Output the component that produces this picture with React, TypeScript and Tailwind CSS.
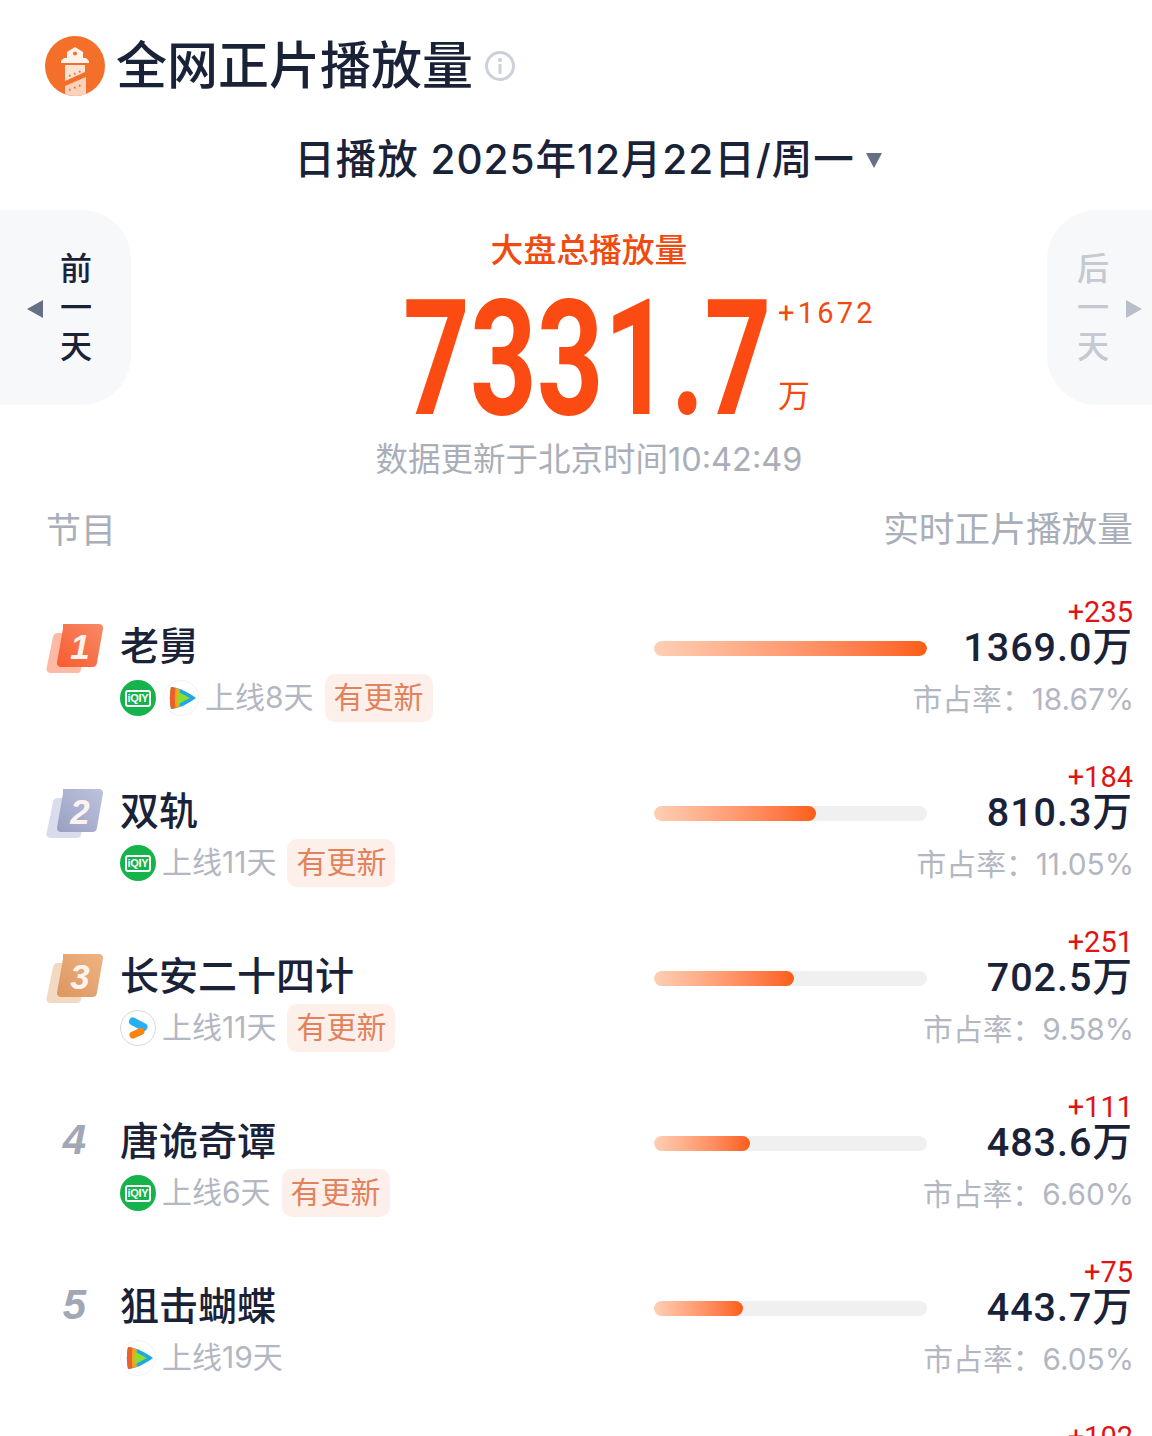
import React from 'react';

const FONT = "font-['Inter','Noto_Sans_CJK_SC',sans-serif]";

interface Show {
  name: string;
  icons: ('iqiyi' | 'tencent' | 'youku')[];
  days: string;
  updated: boolean;
  delta: string;
  value: string;
  share: string;
  bar: number;
}

const shows: Show[] = [
  { name: '老舅', icons: ['iqiyi', 'tencent'], days: '上线8天', updated: true, delta: '+235', value: '1369.0', share: '18.67%', bar: 273 },
  { name: '双轨', icons: ['iqiyi'], days: '上线11天', updated: true, delta: '+184', value: '810.3', share: '11.05%', bar: 162 },
  { name: '长安二十四计', icons: ['youku'], days: '上线11天', updated: true, delta: '+251', value: '702.5', share: '9.58%', bar: 140 },
  { name: '唐诡奇谭', icons: ['iqiyi'], days: '上线6天', updated: true, delta: '+111', value: '483.6', share: '6.60%', bar: 96 },
  { name: '狙击蝴蝶', icons: ['tencent'], days: '上线19天', updated: false, delta: '+75', value: '443.7', share: '6.05%', bar: 89 },
];

const Logo = () => (
  <svg width="60" height="60" viewBox="0 0 60 60" className="shrink-0">
    <defs>
      <clipPath id="logo-clip"><circle cx="30" cy="30" r="30" /></clipPath>
    </defs>
    <g clipPath="url(#logo-clip)">
      <rect width="60" height="60" fill="#f4702a" />
      <path d="M22 22v-6l8-5 8 5v6z" fill="#fdf3ec" />
      <circle cx="30" cy="17.500" r="2" fill="#f4702a" />
      <path d="M16 27v-2l3-3h22l3 3v2z" fill="#fdf3ec" />
      <path d="M20 29h20v7l-20 9z" fill="#fbe3d4" />
      <path d="M20 50l21-9v19H20z" fill="#fbd3bc" />
      <path d="M24 40l1.500-.7M29 38l1.500-.7M34 36l1.500-.7M24 54l1.500-.6M29 52l1.500-.6M34 50l1.500-.6" stroke="#f4702a" strokeWidth="2" />
    </g>
  </svg>
);

const IqiyiIcon = () => (
  <div className="flex h-9 w-9 shrink-0 items-center justify-center rounded-full bg-[#16b24b]">
    <div className="rounded-[3px] border-2 border-white px-[1px] font-['Liberation_Sans',sans-serif] text-[11px] font-bold leading-[13px] tracking-[-0.3px] text-white">
      iQIY
    </div>
  </div>
);

const TencentIcon = () => (
  <svg width="36" height="36" viewBox="0 0 36 36" className="shrink-0">
    <circle cx="18" cy="18" r="17.500" fill="#fff" stroke="#f1f2f4" />
    <path d="M8 7c9 1 17 5 25 11-8 6-16 10-25 11-1.500-7-1.500-15 0-22z" fill="#1fa9e0" />
    <path d="M8 7c-1.500 7-1.500 15 0 22 3-.4 6-1.200 9-2.400-1-5.500-1-11.700 0-17.200-3-1.100-6-2-9-2.400z" fill="#f5a21c" />
    <path d="M8 7c-1.500 7-1.500 15 0 22 1.500-.2 3-.5 4.500-.9-.8-6.500-.8-13.700 0-20.200-1.500-.4-3-.7-4.500-.9z" fill="#e8602c" />
    <path d="M14.500 11.500L27 18l-12.500 6.500z" fill="#8fdc2e" />
  </svg>
);

const YoukuIcon = () => (
  <svg width="36" height="36" viewBox="0 0 36 36" className="shrink-0">
    <circle cx="18" cy="18" r="17.500" fill="#fff" stroke="#d5d8dd" />
    <path d="M13 11.500L23.500 17" stroke="#28aef3" strokeWidth="8" strokeLinecap="round" />
    <path d="M13 25L21 21.500" stroke="#f7860f" strokeWidth="7" strokeLinecap="round" />
  </svg>
);

const RankBadge = ({ rank }: { rank: number }) => {
  if (rank > 3) {
    return (
      <div className="mt-[24px] flex h-[50px] w-[58px] shrink-0 items-center justify-center pr-[1px] font-['Liberation_Sans',sans-serif] text-[42px] font-bold italic text-[#a2a7b5]">
        {rank}
      </div>
    );
  }
  const palette = [
    { back: '#fbb9a6', from: '#f78a66', to: '#fa5a2e' },
    { back: '#d9dcea', from: '#bcc3dc', to: '#9a9fc2' },
    { back: '#f4d9c2', from: '#eeb483', to: '#dd955f' },
  ][rank - 1];
  return (
    <div className="mt-[29px] shrink-0">
      <svg width="58" height="50" viewBox="0 0 58 50">
        <path d="M12 9h26a3 3 0 0 1 3 3.500l-6 33a4 4 0 0 1-4 3.500H4a4 4 0 0 1-3.500-4.500L7 13a5 5 0 0 1 5-4z" fill={palette.back} />
        <defs>
          <linearGradient id={`rank-${rank}`} x1="1" y1="0" x2="0" y2="1">
            <stop offset="0" stopColor={palette.from} />
            <stop offset="1" stopColor={palette.to} />
          </linearGradient>
        </defs>
        <path d="M17 0h36a4 4 0 0 1 4 4.500l-6 34a5 5 0 0 1-5 4.500H15a4 4 0 0 1-4-4.500l6-34z" fill={`url(#rank-${rank})`} />
        <text x="34" y="35" textAnchor="middle" fontFamily="Liberation Sans" fontSize="35" fontWeight="700" fontStyle="italic" fill="#fdf3ee">
          {rank}
        </text>
      </svg>
    </div>
  );
};

const Row = ({ show, rank }: { show: Show; rank: number }) => (
  <div className="flex h-[165px] pl-[46px] pr-[19px]">
    <RankBadge rank={rank} />
    <div className="ml-4 min-w-0 flex-1">
      <div className="mt-[27px] text-[39px] font-medium leading-[48px] text-[#1a2238]">{show.name}</div>
      <div className="mt-[4px] flex h-12 items-center">
        <div className="flex items-center gap-[7px]">
          {show.icons.map(icon =>
            icon === 'iqiyi' ? <IqiyiIcon key={icon} /> : icon === 'tencent' ? <TencentIcon key={icon} /> : <YoukuIcon key={icon} />
          )}
        </div>
        <span className="ml-[6px] pb-[2px] text-[30px] leading-none text-[#b3b7c2]">{show.days}</span>
        {show.updated && (
          <span className="ml-[11px] flex h-12 w-[108px] items-center justify-center rounded-[10px] bg-[#fdf0ea] pb-[2px] text-[30px] text-[#e2825c]">
            有更新
          </span>
        )}
      </div>
    </div>
    <div className="mt-[46px] h-[15px] w-[273px] shrink-0 overflow-hidden rounded-full bg-[#f0f0f0]">
      <div
        className="h-full rounded-full bg-gradient-to-r from-[#fccfb5] to-[#fb5d12]"
        style={{ width: show.bar }}
      />
    </div>
    <div className="flex w-[206px] shrink-0 flex-col items-end whitespace-nowrap">
      <div className="mt-[2px] font-['Roboto',sans-serif] text-[29px] leading-[30px] text-[#e01414]">{show.delta}</div>
      <div className="mt-[-1px] font-['Roboto','Noto_Sans_CJK_SC',sans-serif] text-[39.500px] font-medium leading-[44px] tracking-[1px] text-[#1a2238]">
        {show.value}万
      </div>
      <div className="mt-[9px] mr-[-1px] text-[29.800px] leading-[40px] text-[#b3b7c2]">市占率：{show.share}</div>
    </div>
  </div>
);

export default function App() {
  return (
    <div className={`${FONT} h-[1436px] w-[1152px] overflow-hidden bg-white pt-[36px]`}>
      <div className="flex h-[60px] items-center pl-[45px]">
        <Logo />
        <h1 className="ml-[11px] text-[51px] font-medium leading-[60px] text-[#1a2238]">全网正片播放量</h1>
        <svg width="32" height="32" viewBox="0 0 32 32" className="ml-[11px]">
          <circle cx="16" cy="16" r="13.500" fill="none" stroke="#ccd0da" strokeWidth="3" />
          <circle cx="16" cy="10" r="2" fill="#ccd0da" />
          <rect x="14.500" y="14" width="3" height="10" fill="#ccd0da" />
        </svg>
      </div>

      <div className="mt-[40px] flex h-12 items-center justify-center pl-[24px] text-[40.500px] font-medium leading-[48px] tracking-[1px] text-[#1a2238]">
        <span>日播放 2025年12月22日/周一</span>
        <svg width="16" height="15" viewBox="0 0 16 15" className="ml-[11px]">
          <path d="M0 0h16L8 15z" fill="#667085" />
        </svg>
      </div>

      <div className="mt-[26px] flex items-start">
        <div className="flex h-[195px] w-[131px] shrink-0 items-center rounded-r-[50px] bg-[#f7f8fa] pl-[27px]">
          <svg width="16" height="18" viewBox="0 0 16 18" className="mt-[3px]">
            <path d="M0 9L16 0v18z" fill="#667085" />
          </svg>
          <div className="ml-[17px] flex flex-col items-center pb-[1px] text-[32px] font-medium leading-[39px] text-[#1a2238]">
            <span>前</span>
            <span>一</span>
            <span>天</span>
          </div>
        </div>

        <div className="min-w-0 flex-1 pt-[20px]">
          <div className="text-center text-[32.800px] font-medium leading-[40px] text-[#f04a10]">大盘总播放量</div>
          <div className="flex h-[170px] pl-[272px]">
            <div className="h-[170px] w-[367px] shrink-0 origin-left scale-x-[0.72] whitespace-nowrap font-['Roboto',sans-serif] text-[162px] font-bold leading-[178px] text-[#fb4a12]">
              7331.7
            </div>
            <div className="ml-[8px] flex flex-col items-start whitespace-nowrap text-[#f04a10]">
              <span className="mt-[28px] font-['Roboto',sans-serif] text-[29px] leading-[30px] tracking-[3.200px]">+1672</span>
              <span className="mt-[50px] text-[32px] leading-[36px]">万</span>
            </div>
          </div>
          <div className="text-center text-[32.500px] leading-[40px] text-[#a9aeb9]">数据更新于北京时间10:42:49</div>
        </div>

        <div className="flex h-[195px] w-[105px] shrink-0 items-center rounded-l-[50px] bg-[#f7f8fa] pl-[30px]">
          <div className="flex flex-col items-center pb-[1px] text-[32px] font-medium leading-[39px] text-[#c5c9d2]">
            <span>后</span>
            <span>一</span>
            <span>天</span>
          </div>
          <svg width="16" height="18" viewBox="0 0 16 18" className="ml-[17px] mt-[3px]">
            <path d="M16 9L0 0v18z" fill="#b9bfca" />
          </svg>
        </div>
      </div>

      <div className="mt-[28px] flex h-11 items-center justify-between pl-[46px] pr-[19px] text-[35px] text-[#a9aeb9]">
        <span>节目</span>
        <span className="text-[35.700px]">实时正片播放量</span>
      </div>

      <div className="mt-[43px]">
        {shows.map((show, i) => (
          <Row key={show.name} show={show} rank={i + 1} />
        ))}
        <div className="flex justify-end pr-[19px]">
          <div className="mt-[2px] font-['Roboto',sans-serif] text-[29px] leading-[30px] text-[#e01414]">+102</div>
        </div>
      </div>
    </div>
  );
}
